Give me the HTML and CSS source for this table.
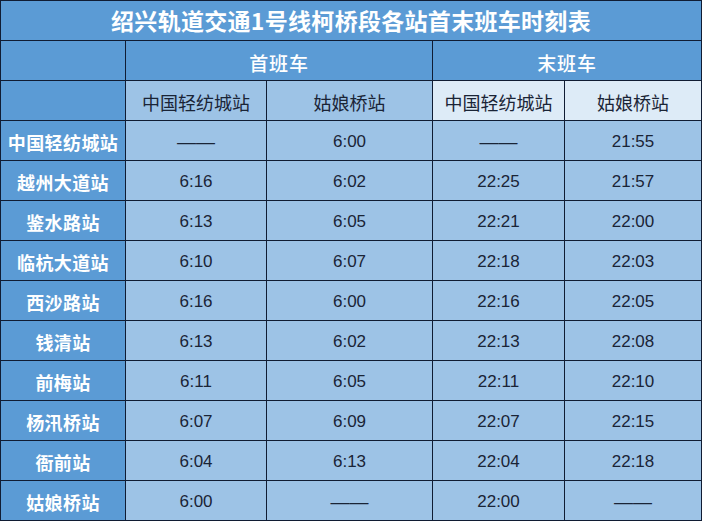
FILE: index.html
```html
<!DOCTYPE html>
<html lang="zh-CN">
<head>
<meta charset="utf-8">
<title>绍兴轨道交通1号线柯桥段各站首末班车时刻表</title>
<link rel="stylesheet" href="styles.css">
</head>
<body>
<div class="sheet" role="table">
  <div class="cell title">绍兴轨道交通1号线柯桥段各站首末班车时刻表</div>

  <div class="cell side"></div>
  <div class="cell group span2">首班车</div>
  <div class="cell group span2">末班车</div>

  <div class="cell side"></div>
  <div class="cell sub">中国轻纺城站</div>
  <div class="cell sub">姑娘桥站</div>
  <div class="cell sub light">中国轻纺城站</div>
  <div class="cell sub light">姑娘桥站</div>

  <div class="cell side">中国轻纺城站</div>
  <div class="cell time dash">——</div><div class="cell time">6:00</div><div class="cell time dash">——</div><div class="cell time">21:55</div>

  <div class="cell side">越州大道站</div>
  <div class="cell time">6:16</div><div class="cell time">6:02</div><div class="cell time">22:25</div><div class="cell time">21:57</div>

  <div class="cell side">鉴水路站</div>
  <div class="cell time">6:13</div><div class="cell time">6:05</div><div class="cell time">22:21</div><div class="cell time">22:00</div>

  <div class="cell side">临杭大道站</div>
  <div class="cell time">6:10</div><div class="cell time">6:07</div><div class="cell time">22:18</div><div class="cell time">22:03</div>

  <div class="cell side">西沙路站</div>
  <div class="cell time">6:16</div><div class="cell time">6:00</div><div class="cell time">22:16</div><div class="cell time">22:05</div>

  <div class="cell side">钱清站</div>
  <div class="cell time">6:13</div><div class="cell time">6:02</div><div class="cell time">22:13</div><div class="cell time">22:08</div>

  <div class="cell side">前梅站</div>
  <div class="cell time">6:11</div><div class="cell time">6:05</div><div class="cell time">22:11</div><div class="cell time">22:10</div>

  <div class="cell side">杨汛桥站</div>
  <div class="cell time">6:07</div><div class="cell time">6:09</div><div class="cell time">22:07</div><div class="cell time">22:15</div>

  <div class="cell side">衙前站</div>
  <div class="cell time">6:04</div><div class="cell time">6:13</div><div class="cell time">22:04</div><div class="cell time">22:18</div>

  <div class="cell side">姑娘桥站</div>
  <div class="cell time">6:00</div><div class="cell time dash">——</div><div class="cell time">22:00</div><div class="cell time dash">——</div>
</div>
</body>
</html>
```

FILE: styles.css
```css
html, body {
  margin: 0;
  padding: 0;
  background: #ffffff;
}

.sheet {
  width: 702px;
  box-sizing: border-box;
  display: grid;
  grid-template-columns: 124px 140px 165px 131px 136px;
  grid-auto-rows: 39px;
  gap: 1px;
  padding: 1px;
  background: #101c33;
  font-family: "Noto Sans CJK SC", "Noto Sans", sans-serif;
}

.cell {
  display: flex;
  align-items: center;
  justify-content: center;
  padding-top: 3px;
  box-sizing: border-box;
  white-space: nowrap;
}

.title {
  grid-column: 1 / -1;
  background: #5b9bd5;
  color: #ffffff;
  font-size: 23px;
  font-weight: 700;
  letter-spacing: 0.3px;
  padding-top: 0;
  padding-bottom: 2px;
}

.side {
  background: #5b9bd5;
  color: #ffffff;
  font-size: 18px;
  font-weight: 700;
  letter-spacing: 0.4px;
}

.group {
  background: #5b9bd5;
  color: #ffffff;
  font-size: 19px;
  font-weight: 500;
  letter-spacing: 0.8px;
}

.span2 {
  grid-column: span 2;
}

.sub {
  background: #9dc3e6;
  color: #1a2436;
  font-size: 18px;
  font-weight: 400;
}

.sub.light {
  background: #ddebf7;
}

.time {
  background: #9dc3e6;
  color: #1a2436;
  font-family: "Liberation Sans", Arial, sans-serif;
  font-size: 17px;
}

.time.dash {
  font-size: 19px;
  letter-spacing: 0;
}
```
